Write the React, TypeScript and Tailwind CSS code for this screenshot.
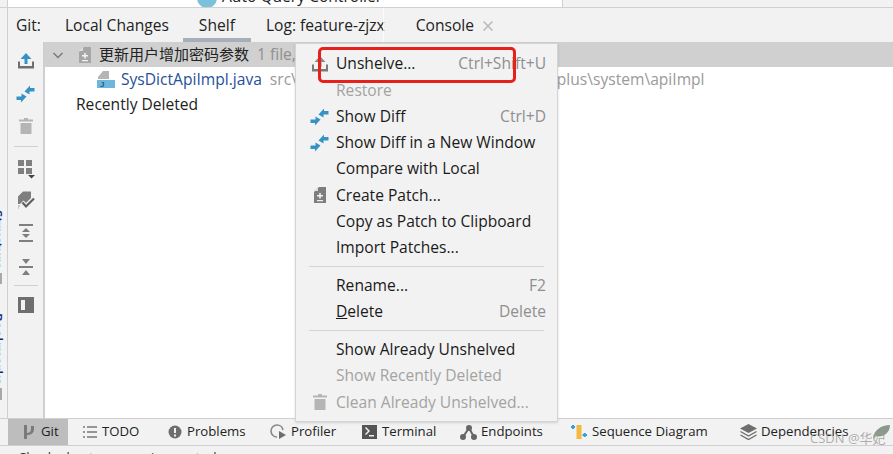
import React from "react";

const F = "[font-family:'Open_Sans','Noto_Sans_CJK_SC',sans-serif]";

function Shelve({ c = "#6e6e6e", a = "#3592c4" }: { c?: string; a?: string }) {
  return (
    <svg width="18" height="18" viewBox="0 0 18 18">
      <path d="M9 1 L14.500 7 H10.500 V12 H7.500 V7 H3.500 Z" fill={a} />
      <path d="M1 9.500 H3 V14 H15 V9.500 H17 V16.500 H1 Z" fill={c} />
    </svg>
  );
}
function Diff() {
  return (
    <svg width="19" height="18" viewBox="0 0 19 18">
      <path d="M18.500 3 H14 V0.500 L8.500 6.500 L13.500 9.500 V6.500 H18.500 Z" fill="#3592c4" />
      <path d="M0.500 15 H5 V17.500 L10.500 11.500 L5.500 8.500 V11.500 H0.500 Z" fill="#3592c4" />
    </svg>
  );
}
function Trash() {
  return (
    <svg width="16" height="18" viewBox="0 0 16 18">
      <path d="M6 1 H10 V2.500 H15 V4.500 H1 V2.500 H6 Z M2.500 6 H13.500 V17 H2.500 Z" fill="#b5b5b5" />
    </svg>
  );
}
function Patch({ c = "#9a9a9a" }: { c?: string }) {
  return (
    <svg width="14" height="18" viewBox="0 0 14 18">
      <path d="M6 1 H13 V17 H1 V6 Z" fill={c} />
      <path d="M5 1 V5 H1 Z" fill="#dcdcdc" />
      <path d="M6.200 7 H7.800 V9 H10 V10.500 H7.800 V12.500 H6.200 V10.500 H4 V9 H6.200 Z M4 14 H10 V15.300 H4 Z" fill="#f2f2f2" />
    </svg>
  );
}
function Row({ label, short, icon, disabled, u }: { label: string; short?: string; icon?: React.ReactNode; disabled?: boolean; u?: boolean }) {
  return (
    <div className="flex h-[26.25px] items-center">
      <div className="flex w-[40px] shrink-0 items-center justify-center pl-[7px]">{icon}</div>
      <span className={disabled ? "text-[#a3a3a3]" : "text-[#1a1a1a]"}>
        {u ? (<><span className="underline">D</span>{label.slice(1)}</>) : label}
      </span>
      {short && <span className="ml-auto pr-[11px] text-[#8f8f8f]">{short}</span>}
    </div>
  );
}
function Sep() {
  return <div className="mx-[13px] my-[5.3px] h-px bg-[#d4d4d4]" />;
}
function Tool({ icon, label, active, w, slot }: { icon: React.ReactNode; label: string; active?: boolean; w: string; slot: string }) {
  return (
    <div className={`flex h-full shrink-0 items-center pl-[14px] text-[13.2px] text-[#222] ${w} ${active ? "bg-[#bdbdbd]" : ""}`}>
      <div className={`flex shrink-0 items-center ${slot}`}>{icon}</div>
      <span>{label}</span>
    </div>
  );
}
function Side({ children, h = "h-[33px]" }: { children: React.ReactNode; h?: string }) {
  return <div className={`flex w-full items-center justify-center ${h}`}>{children}</div>;
}

export default function App() {
  return (
    <div className={`relative flex h-[454px] w-[893px] flex-col overflow-hidden bg-white text-[15.6px] ${F}`}>
      {/* strip above the tool window */}
      <div className="flex h-[8px] shrink-0 border-b border-[#d0d0d0]">
        <div className="h-full w-[7px] bg-[#f2f2f2]" />
        <div className="h-full w-px bg-[#d0d0d0]" />
        <div className="relative w-[554px] overflow-hidden">
          <span className="absolute left-[189px] top-[-15px] whitespace-nowrap text-[15.6px] text-[#222]">
            <span className="mr-[5px] inline-block h-[20px] w-[20px] rounded-full bg-[#7cc0dc] align-middle" />
            Auto Query Controller
          </span>
        </div>
        <div className="h-full flex-1 border-l border-[#d0d0d0] bg-[#f2f2f2]" />
      </div>

      {/* body */}
      <div className="flex min-h-0 flex-1">
        {/* far-left stripe */}
        <div className="relative w-[8px] shrink-0 overflow-hidden border-r border-[#cfcfcf] bg-[#f2f2f2]">
          <span className="absolute left-[-7px] top-[202px] text-[13px] font-semibold leading-[10px] text-[#0c2a80] [writing-mode:vertical-rl]">Structure</span>
          <div className="absolute left-0 top-[265px] h-[11px] w-[2px] bg-[#a8a8a8]" />
          <span className="absolute left-[-7px] top-[305px] text-[13px] font-semibold leading-[10px] text-[#0c2a80] [writing-mode:vertical-rl]">Bookmarks</span>
          <div className="absolute left-0 top-[380px] h-[12px] w-[2px] bg-[#a8a8a8]" />
        </div>

        <div className="flex min-w-0 flex-1 flex-col">
          {/* tabs */}
          <div className="flex h-[34px] shrink-0 items-center bg-[#f2f2f2] text-[#222]">
            <span className="mt-[2px] pl-[8px]">Git:</span>
            <span className="ml-[24px] mt-[2px]">Local Changes</span>
            <div className="relative ml-[14px] flex h-full items-center px-[16px]">
              <span className="mt-[2px]">Shelf</span>
              <div className="absolute bottom-0 left-0 right-0 h-[4px] bg-[#a6aeba]" />
            </div>
            <span className="ml-[15px] mt-[2px]">Log: feature-zjzx</span>
            <span className="ml-[31px] mt-[2px]">Console</span>
            <svg className="ml-[8px] mt-[2px]" width="12" height="12" viewBox="0 0 12 12"><path d="M1.500 1.500 L10.500 10.500 M10.500 1.500 L1.500 10.500" stroke="#b8b8b8" strokeWidth="1.500" /></svg>
          </div>

          <div className="flex min-h-0 flex-1">
            {/* action toolbar */}
            <div className="flex w-[37px] shrink-0 flex-col items-center border-r-[2px] border-[#cfcfcf] bg-[#f2f2f2] pt-[2px]">
              <Side h="h-[33px]"><Shelve a="#3592c4" /></Side>
              <Side h="h-[33px]"><Diff /></Side>
              <Side h="h-[31px]"><Trash /></Side>
              <div className="my-[5px] h-px w-[24px] bg-[#d0d0d0]" />
              <Side h="h-[33px]">
                <svg width="18" height="20" viewBox="0 0 18 20"><path d="M1 1 H7 V7 H1 Z M9 1 H15 V7 H9 Z M1 9 H7 V15 H1 Z M9 9 H15 V15 H9 Z" fill="#7f7f7f" /><path d="M11 16 H18 L14.500 19.500 Z" fill="#444" /></svg>
              </Side>
              <Side h="h-[30px]">
                <svg width="18" height="18" viewBox="0 0 18 18">
                  <path d="M6 0.500 H14 V7 L9 12 L6.500 9.500 L3 13 H1 V5.500 Z" fill="#7f7f7f" />
                  <path d="M1 15 H3 M1 17 H2" stroke="#a0a0a0" strokeWidth="1.200" />
                  <path d="M5.500 11.500 L9 15.500 L17 7.500" stroke="#f2f2f2" strokeWidth="4" fill="none" />
                  <path d="M5.500 11.500 L9 15.500 L17 7.500" stroke="#5f5f5f" strokeWidth="2.200" fill="none" />
                </svg>
              </Side>
              <Side h="h-[36px]">
                <svg width="16" height="18" viewBox="0 0 16 18"><path d="M1 1 H15 M1 17 H15" stroke="#7f7f7f" strokeWidth="2" /><path d="M8 4 L12 8 H4 Z M8 14 L4 10 H12 Z" fill="#7f7f7f" /></svg>
              </Side>
              <Side h="h-[31px]">
                <svg width="16" height="18" viewBox="0 0 16 18"><path d="M1 9 H15" stroke="#7f7f7f" strokeWidth="2" /><path d="M4 1 H12 L8 6 Z M8 12 L12 17 H4 Z" fill="#7f7f7f" /></svg>
              </Side>
              <div className="my-[3px] h-px w-[24px] bg-[#d0d0d0]" />
              <Side h="h-[32px]">
                <svg width="16" height="16" viewBox="0 0 16 16"><path fillRule="evenodd" d="M0 0 H16 V16 H0 Z M3 3 V13 H7 V3 Z" fill="#6e6e6e" /></svg>
              </Side>
            </div>

            {/* tree */}
            <div className="min-w-0 flex-1 overflow-hidden bg-white">
              <div className="flex h-[25px] items-center whitespace-nowrap bg-[#d0d0d0]">
                <svg className="ml-[7px]" width="12" height="12" viewBox="0 0 12 12"><path d="M1.500 4 L6 8.500 L10.500 4" stroke="#7a7a7a" strokeWidth="1.500" fill="none" /></svg>
                <span className="ml-[14px] flex"><Patch c="#a6a6a6" /></span>
                <span className="ml-[7px] text-[15px] text-[#222]">更新用户增加密码参数</span>
                <span className="ml-[8px] text-[#8f8f8f]">1 file, 1 day ago</span>
              </div>
              <div className="flex h-[25px] items-center whitespace-nowrap">
                <svg className="ml-[52px]" width="19" height="19" viewBox="0 0 19 19">
                  <path d="M6 1 H12 V9 H1 V7 Z" fill="#b5b5b5" />
                  <path d="M0 10 H18 V18 H0 Z" fill="#6cb8dd" />
                  <text x="3" y="17" fontSize="8" fontWeight="700" fill="#2c5a78" fontFamily="Liberation Sans">J</text>
                </svg>
                <span className="ml-[5px] text-[#254f9c]">SysDictApiImpl.java</span>
                <span className="ml-[8px] text-[#9a9a9a]">src\main\java\com\yami\shop\services\plus\system\apiImpl</span>
              </div>
              <div className="flex h-[25px] items-center pl-[31px] text-[#222]">Recently Deleted</div>
            </div>
          </div>
        </div>
      </div>

      <div className="flex h-[28px] shrink-0 items-stretch border-y border-[#d0d0d0] bg-[#f2f2f2] pl-[8px]">
        <Tool w="w-[60px]" slot="w-[19px]" active label="Git" icon={<svg width="14" height="16" viewBox="0 0 14 16"><path d="M2 1 H5 V9 C7 9 9 8 9 5 V2 H12 V5 C12 9 9 11 5 11 V15 H2 Z" fill="#7a7a7a" /></svg>} />
        <Tool w="w-[86px] pl-[15px]" slot="w-[19px]" label="TODO" icon={<svg width="14" height="12" viewBox="0 0 14 12"><path d="M0 1 H2 M4 1 H14 M0 6 H2 M4 6 H14 M0 11 H2 M4 11 H14" stroke="#777" strokeWidth="1.600" /></svg>} />
        <Tool w="w-[102px]" slot="w-[19px]" label="Problems" icon={<svg width="14" height="14" viewBox="0 0 14 14"><circle cx="7" cy="7" r="6.500" fill="#6e6e6e" /><path d="M6 3 H8 V8 H6 Z M6 9.500 H8 V11.500 H6 Z" fill="#f2f2f2" /></svg>} />
        <Tool w="w-[92px]" slot="w-[21px]" label="Profiler" icon={<svg width="18" height="18" viewBox="0 0 18 18"><path d="M7 2 A6 6 0 1 0 7 14" stroke="#888" strokeWidth="1.600" fill="none" /><path d="M7 2 A6 6 0 0 1 13 7" stroke="#888" strokeWidth="1.600" fill="none" /><path d="M9 8 L16 12 L9 16 Z" fill="#6e6e6e" /></svg>} />
        <Tool w="w-[98px]" slot="w-[20px]" label="Terminal" icon={<svg width="15" height="14" viewBox="0 0 15 14"><path fillRule="evenodd" d="M0 0 H15 V14 H0 Z M3 3 L6 6 L3 9 L4 10 L8 6 L4 2 Z M7 10 V11.500 H12 V10 Z" fill="#555" /></svg>} />
        <Tool w="w-[111px]" slot="w-[21px]" label="Endpoints" icon={<svg width="17" height="17" viewBox="0 0 17 17"><path d="M3 13 L9 4 L14 13" stroke="#666" strokeWidth="2" fill="none" /><circle cx="3" cy="13" r="3" fill="#666" /><circle cx="9" cy="4" r="3" fill="#666" /><circle cx="14" cy="13" r="3" fill="#666" /></svg>} />
        <Tool w="w-[169px]" slot="w-[21px]" label="Sequence Diagram" icon={<svg width="16" height="16" viewBox="0 0 16 16"><rect x="5.500" y="1" width="5" height="14" fill="#f4b83f" /><path d="M0 3 H4 M2 1 V5 M11.500 11 H16 M13.700 9 V13" stroke="#2f9fe0" strokeWidth="2" /></svg>} />
        <Tool w="w-[136px]" slot="w-[21px]" label="Dependencies" icon={<svg width="17" height="16" viewBox="0 0 17 16"><path d="M8.500 0 L17 4.500 L8.500 9 L0 4.500 Z" fill="#6e6e6e" /><path d="M0.500 7.500 L8.500 12 L16.500 7.500 M0.500 11 L8.500 15.500 L16.500 11" stroke="#6e6e6e" strokeWidth="1.400" fill="none" /></svg>} />
        <svg className="ml-auto mr-[3px] self-center" width="17" height="16" viewBox="0 0 17 16"><path d="M0 15 C1 6 8 1 17 1 C17 9 10 14 3 12 Z" fill="#8a9a8a" /></svg>
      </div>

      {/* status bar */}
      <div className="h-[8px] shrink-0 overflow-hidden bg-[#f2f2f2] pl-[18px] pt-[4px] text-[13px] leading-[15px] text-[#333]">Checked out new version control</div>

      {/* context menu */}
      <div className="absolute left-[295px] top-[43px] w-[263px] border border-[#d4d4d4] bg-[#f2f2f2] pb-[6px] pt-[7px] shadow-sm">
        <Row label="Unshelve..." short="Ctrl+Shift+U" icon={<Shelve c="#7a7a7a" a="#8a8a8a" />} />
        <Row label="Restore" disabled />
        <Row label="Show Diff" short="Ctrl+D" icon={<Diff />} />
        <Row label="Show Diff in a New Window" icon={<Diff />} />
        <Row label="Compare with Local" />
        <Row label="Create Patch..." icon={<Patch c="#7d7d7d" />} />
        <Row label="Copy as Patch to Clipboard" />
        <Row label="Import Patches..." />
        <Sep />
        <Row label="Rename..." short="F2" />
        <Row label="Delete" short="Delete" u />
        <Sep />
        <Row label="Show Already Unshelved" />
        <Row label="Show Recently Deleted" disabled />
        <Row label="Clean Already Unshelved..." disabled icon={<Trash />} />
      </div>

      {/* red annotation */}
      <div className="absolute left-[318px] top-[47px] h-[36px] w-[198px] rounded-[5px] border-[3px] border-[#e8201c]" />

      {/* seam in the tab bar */}
      <div className="absolute left-[383px] top-[8px] h-[34px] w-px bg-white/70" />

      {/* watermark */}
      <span className="absolute left-[810px] top-[429px] text-[13px] text-[#9a9a9a]/80">CSDN @华妃</span>
    </div>
  );
}
